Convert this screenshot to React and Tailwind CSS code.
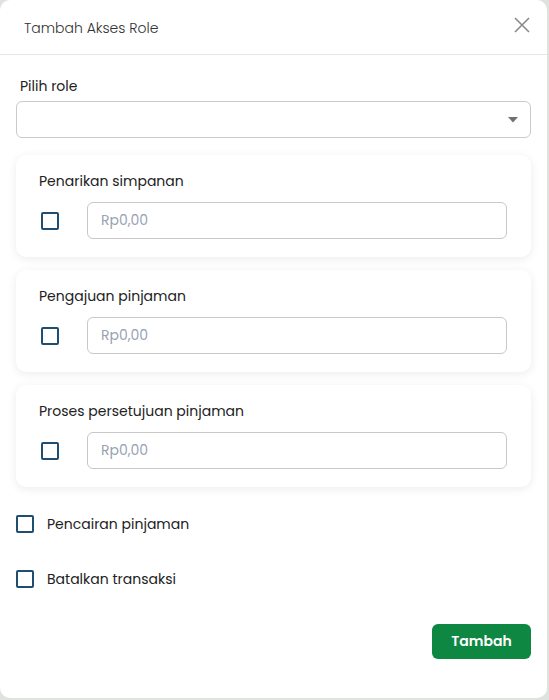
import React from "react";

const font = { fontFamily: "Poppins, Inter, 'Noto Sans', sans-serif" };

function Box() {
  return (
    <span className="block w-[18px] h-[18px] shrink-0 rounded-[2px] border-2 border-[#1f4e70] bg-white" />
  );
}

function LimitCard({ label }) {
  return (
    <div className="rounded-[10px] bg-white shadow-[0_2px_10px_rgba(0,0,0,0.08)] pl-[23px] pr-[24px] pt-[16px] pb-[18px]">
      <div className="text-[14px] leading-[20px] text-[#222]">{label}</div>
      <div className="mt-[11px] flex items-center">
        <span className="ml-[2px]">
          <Box />
        </span>
        <input
          placeholder="Rp0,00"
          className="ml-[28px] h-[37px] flex-1 rounded-[6px] border border-[#c8c8c8] px-[13px] text-[14px] text-[#333] placeholder:text-[#98a2b3] outline-none"
          style={font}
        />
      </div>
    </div>
  );
}

export default function App() {
  const cards = ["Penarikan simpanan", "Pengajuan pinjaman", "Proses persetujuan pinjaman"];
  return (
    <div className="w-[549px] h-[700px] bg-[#dfe3df]" style={font}>
      <div className="w-[547px] h-[698px] rounded-[10px] bg-white flex flex-col">
        <div className="h-[55px] shrink-0 border-b border-[#e6e6e6] flex items-center justify-between pl-[24px] pr-[17px]">
          <span className="text-[14px] font-light text-[#333] pt-[2px]">Tambah Akses Role</span>
          <svg width="16" height="16" viewBox="0 0 16 16" className="mb-[5px]">
            <path d="M1 1 L15 15 M15 1 L1 15" stroke="#8a8a8a" strokeWidth="1.6" />
          </svg>
        </div>

        <div className="px-[16px]">
          <div className="mt-[21px] ml-[4px] text-[14px] leading-[20px] text-[#222]">Pilih role</div>
          <div className="mt-[5px] h-[37px] rounded-[6px] border border-[#cacaca] flex items-center justify-end pr-[12px]">
            <svg width="10" height="6" viewBox="0 0 10 6">
              <path d="M0 0 L10 0 L5 5.5 Z" fill="#707070" />
            </svg>
          </div>

          <div className="mt-[17px] flex flex-col gap-[13px]">
            {cards.map((c) => (
              <LimitCard key={c} label={c} />
            ))}
          </div>

          <div className="mt-[27px] flex items-center gap-[13px]">
            <Box />
            <span className="text-[14px] leading-[20px] text-[#222]">Pencairan pinjaman</span>
          </div>
          <div className="mt-[35px] flex items-center gap-[13px]">
            <Box />
            <span className="text-[14px] leading-[20px] text-[#222]">Batalkan transaksi</span>
          </div>

          <div className="mt-[35px] flex justify-end">
            <button className="w-[99px] h-[35px] rounded-[6px] bg-[#0e8743] text-white text-[14px] font-semibold">
              Tambah
            </button>
          </div>
        </div>
      </div>
    </div>
  );
}
